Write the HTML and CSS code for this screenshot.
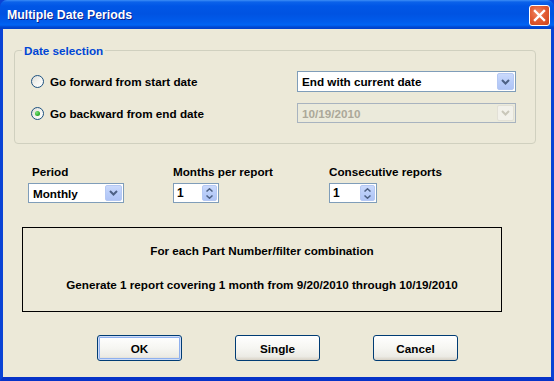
FILE: index.html
```html
<!DOCTYPE html>
<html>
<head>
<meta charset="utf-8">
<link rel="stylesheet" href="styles.css">
</head>
<body>
<div class="window">
  <div class="titlebar">
    <span class="title">Multiple Date Periods</span>
    <span class="close"><svg width="13" height="13" viewBox="0 0 13 13"><path d="M2 2 L11 11 M11 2 L2 11" stroke="#fff" stroke-width="2.4" stroke-linecap="square"/></svg></span>
  </div>
  <div class="client">
    <fieldset class="group">
      <legend class="legend">Date selection</legend>
      <div class="group-grid">
        <label class="radio"><span class="radio-dot"></span>Go forward from start date</label>
        <div class="combo">
          <span class="combo-text">End with current date</span>
          <span class="drop"><svg width="9" height="6" viewBox="0 0 9 6"><path d="M1 1 L4.5 4.5 L8 1" fill="none" stroke="#4D6185" stroke-width="2"/></svg></span>
        </div>
        <label class="radio"><span class="radio-dot checked"></span>Go backward from end date</label>
        <div class="combo disabled">
          <span class="combo-text">10/19/2010</span>
          <span class="drop"><svg width="9" height="6" viewBox="0 0 9 6"><path d="M1 1 L4.5 4.5 L8 1" fill="none" stroke="#C9C7BA" stroke-width="2"/></svg></span>
        </div>
      </div>
    </fieldset>

    <div class="period-row">
      <div class="field">
        <span class="field-label indent">Period</span>
        <div class="combo period">
          <span class="combo-text">Monthly</span>
          <span class="drop"><svg width="9" height="6" viewBox="0 0 9 6"><path d="M1 1 L4.5 4.5 L8 1" fill="none" stroke="#4D6185" stroke-width="2"/></svg></span>
        </div>
      </div>
      <div class="field">
        <span class="field-label">Months per report</span>
        <div class="spin">
          <span class="spin-text">1</span>
          <span class="spin-btns">
            <span class="spin-btn"><svg width="7" height="4" viewBox="0 0 7 4"><path d="M0.5 3.5 L3.5 0.8 L6.5 3.5" fill="none" stroke="#4D6185" stroke-width="1.5"/></svg></span>
            <span class="spin-btn"><svg width="7" height="4" viewBox="0 0 7 4"><path d="M0.5 0.5 L3.5 3.2 L6.5 0.5" fill="none" stroke="#4D6185" stroke-width="1.5"/></svg></span>
          </span>
        </div>
      </div>
      <div class="field">
        <span class="field-label">Consecutive reports</span>
        <div class="spin wide">
          <span class="spin-text">1</span>
          <span class="spin-btns">
            <span class="spin-btn"><svg width="7" height="4" viewBox="0 0 7 4"><path d="M0.5 3.5 L3.5 0.8 L6.5 3.5" fill="none" stroke="#4D6185" stroke-width="1.5"/></svg></span>
            <span class="spin-btn"><svg width="7" height="4" viewBox="0 0 7 4"><path d="M0.5 0.5 L3.5 3.2 L6.5 0.5" fill="none" stroke="#4D6185" stroke-width="1.5"/></svg></span>
          </span>
        </div>
      </div>
    </div>

    <div class="info">
      <p class="info-line">For each Part Number/filter combination</p>
      <p class="info-line">Generate 1 report covering 1 month from 9/20/2010 through 10/19/2010</p>
    </div>

    <div class="buttons">
      <span class="btn default">OK</span>
      <span class="btn">Single</span>
      <span class="btn">Cancel</span>
    </div>
  </div>
</div>
</body>
</html>
```

FILE: styles.css
```css
* { box-sizing: border-box; }
html, body { margin: 0; padding: 0; }
body {
  width: 554px;
  height: 381px;
  overflow: hidden;
  font-family: "Liberation Sans", Arial, sans-serif;
  font-weight: bold;
  font-size: 11.7px;
  color: #000;
}
.window {
  width: 554px;
  height: 381px;
  display: flex;
  flex-direction: column;
  background: #0A43D5;
}
.titlebar {
  height: 29px;
  flex: none;
  display: flex;
  align-items: center;
  justify-content: space-between;
  padding: 0 4px 0 7px;
  border-radius: 7px 7px 0 0;
  background: linear-gradient(to bottom, #3D8EF6 0px, #0B62EA 2px, #0056E6 6px, #0053E2 14px, #005CEC 22px, #0064F4 25px, #0048D2 27px, #0040CB 29px);
}
.title {
  color: #fff;
  font-size: 12.3px;
  font-weight: bold;
  text-shadow: 1px 1px 0 #0A1E8C;
  margin-top: 1px;
}
.close {
  width: 21px;
  height: 21px;
  border: 1px solid #fff;
  border-radius: 3px;
  display: flex;
  align-items: center;
  justify-content: center;
  background: radial-gradient(circle at 40% 35%, #F08A66 0%, #E35D34 45%, #CB4218 100%);
  margin-top: 1px;
}
.client {
  flex: 1;
  background: #ECE9D8;
  border-left: 3px solid #0A43D5;
  border-right: 3px solid #0A43D5;
  border-bottom: 4px solid #0733C8;
  padding: 15px 15px 0 11px;
  display: flex;
  flex-direction: column;
}
.group {
  margin: 0;
  padding: 14px 19px 20px 16px;
  border: 1px solid #D0D0BF;
  border-radius: 4px;
  min-width: 0;
}
.legend {
  color: #0046D5;
  padding: 0 2px;
  margin-left: -9px;
  line-height: 13px;
}
.group-grid {
  display: grid;
  grid-template-columns: 1fr 219px;
  row-gap: 11px;
  align-items: center;
}
.radio {
  display: flex;
  align-items: center;
  gap: 6px;
}
.radio-dot {
  width: 13px;
  height: 13px;
  border-radius: 50%;
  border: 1px solid #1C5180;
  background: linear-gradient(135deg, #DCDCD6 0%, #F3F3EF 50%, #FFFFFF 100%);
  display: flex;
  align-items: center;
  justify-content: center;
}
.radio-dot.checked::after {
  content: "";
  width: 5px;
  height: 5px;
  border-radius: 50%;
  background: radial-gradient(circle at 35% 35%, #7BE37B 0%, #2FAE2F 60%, #1A8C1A 100%);
}
.combo {
  height: 21px;
  border: 1px solid #7F9DB9;
  background: #fff;
  display: flex;
  align-items: center;
  justify-content: space-between;
  padding: 1px;
}
.combo.disabled {
  height: 20px;
  background: #EBEADB;
  border-color: #A8B3BF;
  color: #ACA899;
}
.combo-text {
  padding-left: 3px;
}
.drop {
  width: 17px;
  height: 17px;
  border: 1px solid #B5C8F3;
  border-radius: 2px;
  background: linear-gradient(to bottom, #CBDAFC 0%, #B9CDF9 50%, #AFC4F6 100%);
  display: flex;
  align-items: center;
  justify-content: center;
}
.combo.disabled .drop {
  height: 16px;
  border-color: #E2E0D6;
  background: #F2F1EA;
}
.period-row {
  display: grid;
  grid-template-columns: 145px 156px auto;
  margin-top: 21px;
  padding-left: 14px;
}
.field {
  display: flex;
  flex-direction: column;
  align-items: flex-start;
  gap: 5px;
}
.field-label {
  line-height: 13px;
}
.field-label.indent { padding-left: 4px; }
.combo.period { width: 96px; height: 20px; }
.combo.period .drop { height: 16px; }
.spin {
  width: 46px;
  height: 20px;
  border: 1px solid #7F9DB9;
  background: #fff;
  display: flex;
  justify-content: space-between;
  padding: 1px;
}
.spin.wide { width: 48px; }
.spin-text {
  padding-left: 2px;
  line-height: 16px;
  font-size: 12px;
}
.spin-btns {
  width: 15px;
  display: flex;
  flex-direction: column;
  border-radius: 2px;
  overflow: hidden;
  border: 1px solid #B5C8F3;
  background: linear-gradient(to bottom, #CBDAFC 0%, #B9CDF9 50%, #AFC4F6 100%);
}
.spin-btn {
  flex: 1;
  display: flex;
  align-items: center;
  justify-content: center;
}
.info {
  margin: 24px 34px 0 8px;
  height: 85px;
  border: 1px solid #000;
  display: flex;
  flex-direction: column;
  align-items: center;
  padding-top: 16px;
  gap: 21px;
}
.info-line {
  margin: 0;
  line-height: 13px;
}
.buttons {
  display: flex;
  gap: 53px;
  margin-top: 23px;
  padding-left: 83px;
}
.btn {
  width: 85px;
  height: 26px;
  border: 1px solid #003C74;
  border-radius: 3px;
  background: linear-gradient(to bottom, #FFFFFF 0%, #F6F6F2 50%, #ECEBE5 85%, #D8D2C6 100%);
  display: flex;
  align-items: center;
  justify-content: center;
}
.btn.default {
  box-shadow: inset 0 0 0 1px #CEDCF8, inset 0 0 0 2px #8FB0EE;
}
```
